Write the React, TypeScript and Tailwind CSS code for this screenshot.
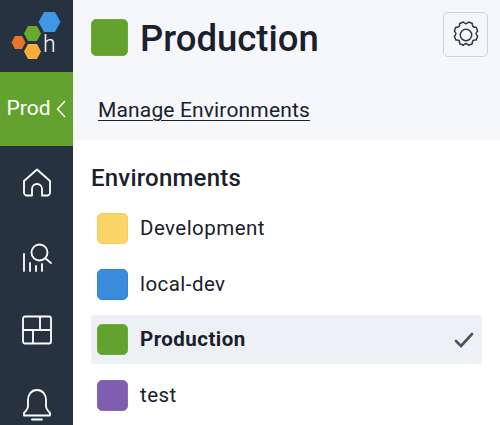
const environments = [
  { name: 'Development', color: 'bg-[#f9d466] border-[#f5cd5c]' },
  { name: 'local-dev', color: 'bg-[#3a8bdc] border-[#3485d6]' },
  { name: 'Production', color: 'bg-[#63a22f] border-[#6cab35]', active: true },
  { name: 'test', color: 'bg-[#7f5eb0] border-[#8a68ba]' },
];

function Logo() {
  return (
    <svg width="73" height="72" viewBox="0 0 73 72" fill="none">
      <polygon points="38.5,22 44,12 55,12 60.5,22 55,32 44,32" fill="#3f97e6" />
      <polygon points="24,33.5 28,26 37,26 41,33.5 37,41 28,41" fill="#68a92f" />
      <polygon points="11.5,42.5 15,36 22,36 25.5,42.5 22,49 15,49" fill="#e9752c" />
      <polygon points="24,51.5 28,44 37,44 41,51.5 37,59 28,59" fill="#f7ac3e" />
      <text x="43" y="52" fill="#fff" fontSize="23" fontWeight="300" fontFamily="Roboto, sans-serif">h</text>
    </svg>
  );
}

function Sidebar() {
  return (
    <nav className="flex h-[425px] w-[73px] shrink-0 flex-col items-center overflow-hidden bg-[#273240]">
      <div className="h-[72px] w-full">
        <Logo />
      </div>
      <div className="flex h-[74px] w-full items-center justify-center gap-[6px] bg-[#63a22f] text-[21px] text-white">
        <span>Prod</span>
        <svg width="10" height="18" viewBox="0 0 10 18" fill="none" stroke="#fff" strokeWidth="1.4">
          <path d="M9 1 1.5 9 9 17" />
        </svg>
      </div>
      <div className="mt-[22px] flex flex-col items-center gap-[43.5px]">
        <svg width="30" height="30" viewBox="0 0 30 30" fill="none" stroke="#fff" strokeWidth="1.8" strokeLinejoin="round">
          <path d="M15 1.5 2 13v12a3 3 0 0 0 2 2.5h6V21a5 5 0 0 1 10 0v6.5h6a3 3 0 0 0 2-2.5V13L15 1.5Z" />
        </svg>
        <svg width="30" height="30" viewBox="0 0 30 30" fill="none" stroke="#fff" strokeWidth="1.8" strokeLinecap="round">
          <circle cx="17.5" cy="10.5" r="8" />
          <path d="m23.5 16.5 5.5 4.5M2 12v17M8 21v8M14 24v5M20 22v7" />
        </svg>
        <svg width="30" height="30" viewBox="0 0 30 30" fill="none" stroke="#fff" strokeWidth="1.8" strokeLinejoin="round">
          <rect x="1" y="1.5" width="28" height="27" rx="2" />
          <path d="M1 15h28M18 1.5V15M11 15v13.5" />
        </svg>
        <svg width="30" height="32" viewBox="0 0 30 32" fill="none" stroke="#fff" strokeWidth="1.8" strokeLinejoin="round">
          <path d="M15 1c-6 0-9 5-9 10v6c0 3-2 5-4 7v2.500h26V24c-2-2-4-4-4-7v-6c0-5-3-10-9-10Z" />
          <path d="M10 30.500h10" strokeLinecap="round" />
        </svg>
      </div>
    </nav>
  );
}

export default function App() {
  return (
    <div className="flex h-[425px] w-[500px] overflow-hidden bg-white font-['Roboto',sans-serif] text-[#1a202c]">
      <Sidebar />
      <main className="min-w-0 flex-1">
        {/* Page header */}
        <header className="h-[140px] bg-[#f5f7fb] pl-[18px] pr-[12px]">
          <div className="flex items-start justify-between pt-[12px]">
            <div className="flex items-center gap-[12px] pt-[3px]">
              <span className="h-[37px] w-[37px] rounded-[5px] border border-[#6cab35] bg-[#63a22f]" />
              <h1 className="pt-[3px] text-[36.5px] leading-[42px] font-medium">Production</h1>
            </div>
            <button className="flex h-[45px] w-[45px] items-center justify-center rounded-[5px] border border-[#cbd5e0]" aria-label="Settings">
              <svg width="32" height="32" viewBox="0 0 28 28" fill="none" stroke="#2d3748" strokeWidth="1.3" strokeLinejoin="round">
                <circle cx="14" cy="14" r="5" />
                <path d="m11.7 2.6 1 .9a2 2 0 0 0 2.6 0l1-.9 3.2 1.3.1 1.4a2 2 0 0 0 1.9 1.9l1.4.1 1.3 3.2-.9 1a2 2 0 0 0 0 2.6l.9 1-1.3 3.2-1.4.1a2 2 0 0 0-1.9 1.9l-.1 1.4-3.2 1.3-1-.9a2 2 0 0 0-2.6 0l-1 .9-3.2-1.3-.1-1.4a2 2 0 0 0-1.9-1.9l-1.4-.1-1.3-3.2.9-1a2 2 0 0 0 0-2.6l-.9-1 1.3-3.2 1.4-.1a2 2 0 0 0 1.9-1.9l.1-1.4 3.2-1.3Z" />
              </svg>
            </button>
          </div>
          <a className="mt-[38px] ml-[7px] inline-block text-[21px] leading-6 tracking-[0.15px] underline decoration-1 underline-offset-[3px]" href="#">
            Manage Environments
          </a>
        </header>

        {/* Environment list */}
        <section className="pl-[18px] pr-[18px] pt-[24px]">
          <h2 className="text-[24px] leading-7 tracking-[0.2px] font-medium">Environments</h2>
          <ul className="mt-[12px] flex flex-col gap-[6.5px]">
            {environments.map((env) => (
              <li
                key={env.name}
                className={`flex h-[49px] items-center gap-[12px] rounded-[3px] pl-[6px] pr-[8px] text-[20.5px] tracking-[0.45px] ${env.active ? 'bg-[#edf0f4] font-bold' : ''}`}
              >
                <span className={`h-[31px] w-[31px] rounded-[5px] border ${env.color}`} />
                <span className="flex-1">{env.name}</span>
                {env.active && (
                  <svg width="20" height="16" viewBox="0 0 20 16" fill="none" stroke="#4a5568" strokeWidth="2.6" strokeLinecap="round">
                    <path d="M2 9l5 5L18 2" />
                  </svg>
                )}
              </li>
            ))}
          </ul>
        </section>
      </main>
    </div>
  );
}
